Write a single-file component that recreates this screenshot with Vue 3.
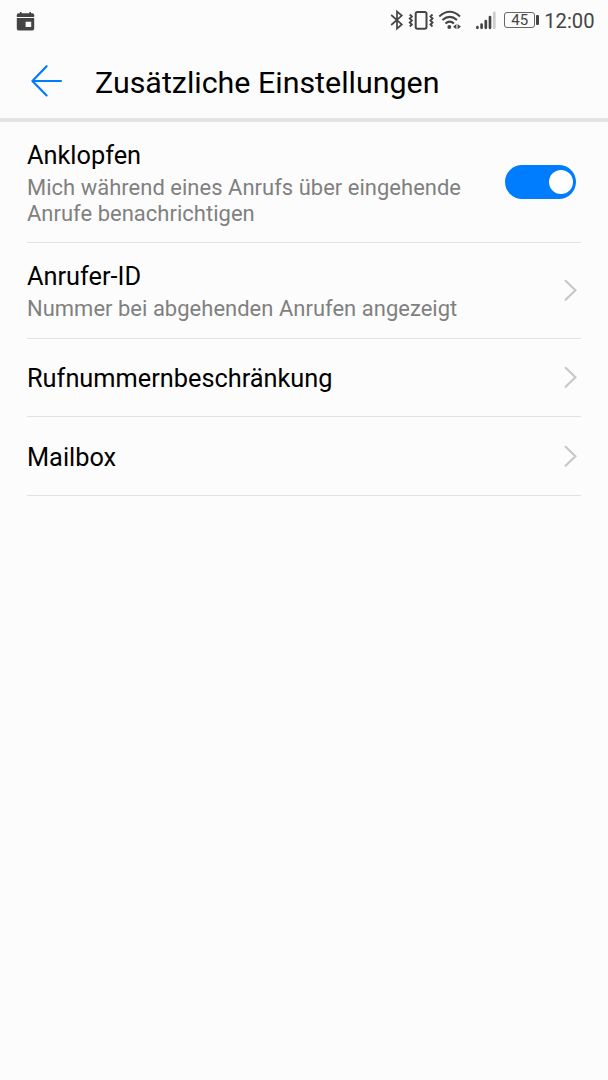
<template>
  <div class="screen">
    <!-- Statusleiste -->
    <div class="status-bar">
      <svg class="calendar-icon" width="20" height="20" viewBox="0 0 20 20">
        <path d="M4.7 1v2M14.2 1v2" stroke="#444" stroke-width="1.6" />
        <path d="M.8 6V4.2Q.8 2.3 2.7 2.3H16.3Q18.2 2.3 18.2 4.2V6Z" fill="#444" />
        <path
          d="M.8 7H18.2V17.6Q18.2 19.5 16.3 19.5H2.7Q.8 19.5 .8 17.6ZM9.6 10.7V15.9H15.2V10.7Z"
          fill="#444"
          fill-rule="evenodd"
        />
      </svg>

      <div class="status-right">
        <svg class="signals" width="116" height="24" viewBox="0 0 116 24">
          <g fill="none" stroke="#444">
            <path d="M1.2 7L11.8 16.4L7 20.6V3.6L11.8 7.6L1.2 17" stroke-width="1.7" />
            <rect x="25.7" y="4" width="10.8" height="16.8" rx="1.8" stroke-width="2" />
            <path
              d="M19.8 6.2l2 2-2 2 2 2-2 2 2 2-2 2M42.5 6.2l-2 2 2 2-2 2 2 2-2 2 2 2"
              stroke-width="1.9"
              transform="translate(0 .3)"
            />
            <path
              d="M49.3 8.4Q59.8 -.8 70 8.4M52.4 12.1Q59.8 5.7 67 12.1M55.4 15.5Q59.8 11.8 64 15.5"
              stroke-width="2"
            />
          </g>
          <circle cx="59.3" cy="19" r="1.9" fill="#444" />
          <path d="M66.4 16.1v5.2L63.1 18.7ZM67.6 16.1v5.2L70.9 18.7Z" fill="#444" />
          <g stroke-width="2.7" stroke-linecap="round">
            <path d="M87.4 19.8v-.6M91.6 19.8v-3.2M95.8 19.8V13M100 19.8V9" stroke="#444" />
            <path d="M104.3 19.8V4.8" stroke="#ccc" />
          </g>
        </svg>
        <div class="battery">
          <span class="battery-level">45</span>
          <span class="battery-tip"></span>
        </div>
        <span class="clock">12:00</span>
      </div>
    </div>

    <!-- Kopfzeile -->
    <header class="header">
      <button class="back-button" aria-label="Zurück">
        <svg width="34" height="34" viewBox="0 0 34 34">
          <path
            d="M17.6 2.2L3.4 17L17.6 31.4M3.4 17H32"
            fill="none"
            stroke="#007dff"
            stroke-width="2.2"
            stroke-linecap="round"
            stroke-linejoin="round"
          />
        </svg>
      </button>
      <h1 class="title">Zusätzliche Einstellungen</h1>
    </header>

    <!-- Einstellungen -->
    <ul class="settings">
      <li
        v-for="item in items"
        :key="item.label"
        class="setting"
        :class="item.size"
      >
        <div class="setting-text">
          <div class="setting-label">{{ item.label }}</div>
          <div v-if="item.description" class="setting-description">
            {{ item.description }}
          </div>
        </div>
        <button
          v-if="item.toggle"
          class="switch"
          :class="{ on: callWaiting }"
          role="switch"
          :aria-checked="callWaiting"
          :aria-label="item.label"
          @click="callWaiting = !callWaiting"
        >
          <span class="switch-thumb"></span>
        </button>
        <svg v-else class="chevron" width="16" height="24" viewBox="0 0 16 24">
          <path
            d="M2.6 2.8L12.4 12.3L2.6 21.8"
            fill="none"
            stroke="#c8c8c8"
            stroke-width="2.2"
            stroke-linecap="round"
          />
        </svg>
      </li>
    </ul>
  </div>
</template>

<script setup>
import { ref } from 'vue'

const callWaiting = ref(true)

const items = [
  {
    label: 'Anklopfen',
    description: 'Mich während eines Anrufs über eingehende Anrufe benachrichtigen',
    size: 'large',
    toggle: true,
  },
  {
    label: 'Anrufer-ID',
    description: 'Nummer bei abgehenden Anrufen angezeigt',
    size: 'medium',
  },
  { label: 'Rufnummernbeschränkung', size: 'small' },
  { label: 'Mailbox', size: 'small' },
]
</script>

<style>
body {
  margin: 0;
  background: #fcfcfc;
}
</style>

<style scoped>
.screen {
  height: 1080px;
  background: #fcfcfc;
  color: #000;
  font-family: Roboto, sans-serif;
  overflow: hidden;
}

.status-bar {
  display: flex;
  align-items: center;
  justify-content: space-between;
  box-sizing: border-box;
  height: 42px;
  padding: 0 13.5px 0 16.4px;
  color: #444;
}

.calendar-icon {
  margin-top: -1px;
}

.status-right {
  display: flex;
  align-items: center;
}

.signals {
  margin-top: -2px;
}

.battery {
  display: flex;
  align-items: center;
  margin: -2px 5px 0 -2px;
}

.battery-level {
  box-sizing: border-box;
  width: 31px;
  height: 16px;
  border: 1px solid #666;
  border-radius: 3px;
  font-size: 15px;
  line-height: 15px;
  text-align: center;
}

.battery-tip {
  width: 3px;
  height: 10px;
  margin-left: 1px;
  border-radius: 1px;
  background: #444;
}

.clock {
  font-size: 20.2px;
  line-height: 24px;
}

.header {
  display: flex;
  align-items: center;
  box-sizing: border-box;
  height: 80px;
  padding: 1px 30px 0 29px;
  border-bottom: 4px solid #e4e4e4;
}

.back-button {
  display: flex;
  margin-right: 32px;
  padding: 0;
  border: none;
  background: none;
  cursor: pointer;
}

.title {
  margin: 4px 0 0;
  font-size: 30.4px;
  font-weight: 400;
  line-height: 36px;
}

.settings {
  margin: 0;
  padding: 0 27px;
  list-style: none;
}

.setting {
  display: flex;
  align-items: center;
  justify-content: space-between;
  box-sizing: border-box;
  border-bottom: 1px solid #e2e2e2;
}

.setting.large {
  height: 121px;
}

.setting.medium {
  height: 95.5px;
}

.setting.small {
  height: 78.5px;
}

.setting-text {
  max-width: 450px;
  padding-top: 3.6px;
}

.setting-label {
  font-size: 25.33px;
  line-height: 30px;
}

.setting-description {
  margin-top: 4px;
  color: #808080;
  font-size: 21.95px;
  line-height: 25.5px;
  letter-spacing: 0.04px;
}

.switch {
  display: flex;
  align-items: center;
  box-sizing: border-box;
  width: 71px;
  height: 34px;
  margin-right: 5px;
  padding: 0 3px;
  border: none;
  border-radius: 17px;
  background: #ccc;
  cursor: pointer;
}

.switch.on {
  justify-content: flex-end;
  background: #007dff;
}

.switch-thumb {
  width: 24px;
  height: 24px;
  border-radius: 50%;
  background: #fff;
}

.chevron {
  margin-right: 2px;
}
</style>
